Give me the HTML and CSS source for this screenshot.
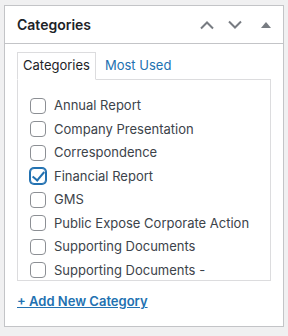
FILE: index.html
```html
<!DOCTYPE html>
<html lang="en">
<head>
    <meta charset="UTF-8">
    <title>Categories</title>
    <link rel="stylesheet" href="styles.css">
</head>
<body>
    <div class="postbox">
        <div class="postbox-header">
            <h2 class="hndle">Categories</h2>
            <div class="handle-actions">
                <button class="handle-btn" aria-label="Move up">
                    <svg width="16" height="10" viewBox="0 0 16 10"><path d="M2 8.5 L8 2.5 L14 8.5" fill="none" stroke="#787c82" stroke-width="2"/></svg>
                </button>
                <button class="handle-btn" aria-label="Move down">
                    <svg width="16" height="10" viewBox="0 0 16 10"><path d="M2 1.5 L8 7.5 L14 1.5" fill="none" stroke="#787c82" stroke-width="2"/></svg>
                </button>
                <button class="handle-btn toggle" aria-label="Toggle panel">
                    <svg width="10" height="6" viewBox="0 0 10 6"><path d="M0 6 L5 0 L10 6 Z" fill="#787c82"/></svg>
                </button>
            </div>
        </div>
        <div class="inside">
            <ul class="category-tabs">
                <li class="tabs">Categories</li>
                <li><a href="#">Most Used</a></li>
            </ul>
            <div class="tabs-panel">
                <ul class="categorychecklist">
                    <li><label><input type="checkbox"> Annual Report</label></li>
                    <li><label><input type="checkbox"> Company Presentation</label></li>
                    <li><label><input type="checkbox"> Correspondence</label></li>
                    <li><label><input type="checkbox" checked> Financial Report</label></li>
                    <li><label><input type="checkbox"> GMS</label></li>
                    <li><label><input type="checkbox"> Public Expose Corporate Action</label></li>
                    <li><label><input type="checkbox"> Supporting Documents</label></li>
                    <li><label><input type="checkbox"> Supporting Documents -</label></li>
                </ul>
            </div>
            <a href="#" class="add-new">+ Add New Category</a>
        </div>
    </div>
</body>
</html>
```

FILE: styles.css
```css
body {
    margin: 0;
    padding: 5px 4px 7px;
    background: #f0f0f1;
    font-family: Inter, "Liberation Sans", sans-serif;
    font-size: 13px;
    color: #3c434a;
}
.postbox {
    background: #fff;
    border: 1px solid #c3c4c7;
    height: 322px;
    box-sizing: border-box;
}
.postbox-header {
    display: flex;
    align-items: center;
    justify-content: space-between;
    height: 37px;
    border-bottom: 1px solid #c3c4c7;
    padding-left: 12px;
}
.hndle {
    margin: 0;
    font-size: 14px;
    font-weight: 600;
    color: #1d2327;
}
.handle-actions {
    display: flex;
    align-items: center;
}
.handle-btn {
    width: 28px;
    height: 36px;
    border: none;
    background: none;
    padding: 0;
    display: flex;
    align-items: center;
    justify-content: center;
}
.handle-btn.toggle {
    width: 34px;
}
.inside {
    padding: 8px 12px 0;
}
.category-tabs {
    list-style: none;
    margin: 0;
    padding: 0;
    display: flex;
    align-items: flex-end;
}
.category-tabs li {
    padding: 4px 5px 6px;
    line-height: 16px;
}
.category-tabs li.tabs {
    border: 1px solid #dcdcde;
    border-bottom-color: #fff;
    margin-bottom: -1px;
    position: relative;
    color: #1d2327;
}
.category-tabs a {
    color: #2271b1;
    text-decoration: none;
    padding-left: 4px;
}
.tabs-panel {
    border: 1px solid #dcdcde;
    height: 200px;
    overflow: hidden;
    padding: 0 12px;
}
.categorychecklist {
    list-style: none;
    margin: 0;
    padding: 16px 0 0;
}
.categorychecklist li {
    height: 23.5px;
    line-height: 19px;
}
.categorychecklist label {
    display: flex;
    align-items: center;
    gap: 8px;
}
.categorychecklist input {
    appearance: none;
    width: 16px;
    height: 16px;
    margin: 0;
    border: 1px solid #8c8f94;
    border-radius: 4px;
    background: #fff;
    position: relative;
}
.categorychecklist input:checked {
    border-color: #2271b1;
    box-shadow: 0 0 0 1px #2271b1;
}
.categorychecklist input:checked::after {
    content: "";
    position: absolute;
    left: 4px;
    top: 0px;
    width: 5px;
    height: 10px;
    border: solid #2271b1;
    border-width: 0 2px 2px 0;
    transform: rotate(40deg);
}
.add-new {
    display: inline-block;
    margin-top: 12px;
    color: #2271b1;
    font-weight: 600;
    text-decoration: underline;
}
```
